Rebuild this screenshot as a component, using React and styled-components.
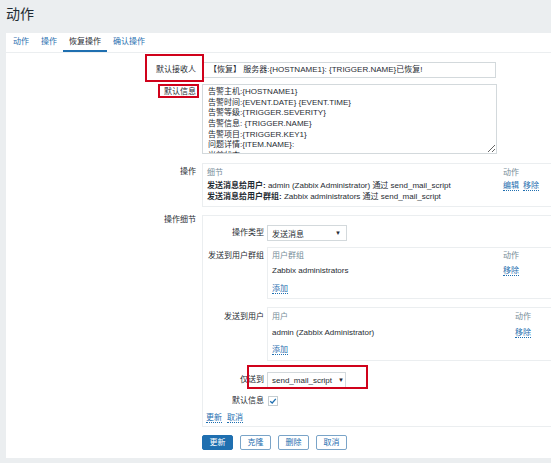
import React from "react";
import styled, { createGlobalStyle } from "styled-components";

const GlobalStyle = createGlobalStyle`
  html, body {
    margin: 0;
    padding: 0;
    background: #ebeef0;
  }
  body {
    font-family: "Liberation Sans", "Noto Sans CJK SC", sans-serif;
    font-size: 8px;
    color: #1f2c33;
  }
`;

const BLUE = "#1f6fb0";
const RED = "#d0021b";

const Page = styled.div`
  width: 551px;
  height: 463px;
  overflow: hidden;
  background: #ebeef0;
`;

const Header = styled.div`
  height: 33px;
  box-sizing: border-box;
  padding: 5px 0 0 6px;
`;

const Title = styled.h1`
  margin: 0;
  font-size: 14px;
  line-height: 18px;
  font-weight: normal;
  color: #1f2c33;
`;

const Panel = styled.div`
  margin-left: 6px;
  height: 425px;
  background: #fff;
  overflow: hidden;
`;

const Tabs = styled.div`
  display: flex;
  padding-left: 1px;
  border-bottom: 1px solid #ebeef0;
`;

const Tab = styled.div`
  padding: 0 6px;
  height: 17px;
  line-height: 17px;
  color: ${(p) => (p.$active ? "#1f2c33" : BLUE)};
  border-bottom: 2px solid ${(p) => (p.$active ? BLUE : "transparent")};
`;

const Form = styled.div`
  display: flex;
  flex-direction: column;
  padding-top: 9px;
`;

const Row = styled.div`
  position: relative;
  display: grid;
  grid-template-columns: 190px 1fr;
  column-gap: 6px;
  margin-top: ${(p) => p.$mt || 0}px;
`;

const Label = styled.div`
  text-align: right;
  line-height: ${(p) => p.$lh || 10}px;
  padding-top: ${(p) => p.$pt || 0}px;
  white-space: nowrap;
`;

const RedMark = styled.div`
  position: absolute;
  border: 2px solid ${RED};
  box-sizing: border-box;
  pointer-events: none;
`;

const TextInput = styled.div`
  width: 294px;
  height: 16px;
  box-sizing: border-box;
  border: 1px solid #d3d9dc;
  padding: 0 6px;
  line-height: 14px;
  white-space: nowrap;
  overflow: hidden;
`;

const TextArea = styled.textarea`
  display: block;
  width: 295px;
  height: 70px;
  box-sizing: border-box;
  border: 1px solid #d3d9dc;
  padding: 2px 5px;
  margin: 0;
  font-family: "Liberation Sans", "Noto Sans CJK SC", sans-serif;
  font-size: 8px;
  line-height: 10.67px;
  color: #1f2c33;
  resize: both;
  outline: none;
  &::-webkit-scrollbar {
    width: 5px;
  }
  &::-webkit-scrollbar-track {
    background: #f4f6f7;
  }
  &::-webkit-scrollbar-thumb {
    background: #c5cdd1;
  }
  &::-webkit-scrollbar-corner {
    background: #fff;
  }
`;

const Box = styled.div`
  border: 1px solid #ebeef0;
  margin-right: -1px;
  padding: ${(p) => p.$pad || "4px 0 4px 4px"};
`;

const Table = styled.div`
  display: grid;
  grid-template-columns: 1fr ${(p) => p.$action}px;
`;

const Th = styled.div`
  color: #768d99;
  line-height: 10px;
  margin-bottom: ${(p) => p.$mb || 0}px;
`;

const Td = styled.div`
  line-height: 11px;
  white-space: nowrap;
  margin-top: ${(p) => p.$mt || 0}px;
`;

const Strong = styled.b`
  font-weight: bold;
`;

const Link = styled.span`
  color: ${BLUE};
  border-bottom: 1px dotted ${BLUE};
  margin-right: ${(p) => p.$mr || 0}px;
  cursor: pointer;
`;

const SubRow = styled.div`
  position: relative;
  display: grid;
  grid-template-columns: 61px 1fr;
  column-gap: 3px;
  margin-top: ${(p) => p.$mt || 0}px;
`;

const Select = styled.div`
  display: flex;
  align-items: center;
  justify-content: ${(p) => (p.$tight ? "flex-start" : "space-between")};
  gap: 6px;
  width: ${(p) => p.$w}px;
  height: 16px;
  box-sizing: border-box;
  border: 1px solid #d3d9dc;
  padding: 0 5px 0 4px;
  white-space: nowrap;
`;

const Arrow = styled.span`
  font-size: 6px;
  color: #1f2c33;
`;

const Check = styled.div`
  width: 10px;
  height: 10px;
  box-sizing: border-box;
  border: 1px solid #c5cdd1;
  display: flex;
  align-items: center;
  justify-content: center;
  margin-left: 1px;
`;

const LinkRow = styled.div`
  line-height: 10px;
  margin-top: 7px;
  padding-left: 3px;
`;

const Buttons = styled.div`
  display: flex;
  gap: 7px;
  margin-top: 8px;
  padding-left: 196px;
`;

const Button = styled.button`
  width: 31px;
  height: 15px;
  padding: 0;
  box-sizing: border-box;
  border-radius: 2px;
  font-family: "Liberation Sans", "Noto Sans CJK SC", sans-serif;
  font-size: 8px;
  line-height: 13px;
  border: 1px solid ${(p) => (p.$primary ? BLUE : "#7aa4c8")};
  background: ${(p) => (p.$primary ? BLUE : "#fff")};
  color: ${(p) => (p.$primary ? "#fff" : BLUE)};
`;

const message = [
  "告警主机:{HOSTNAME1}",
  "告警时间:{EVENT.DATE} {EVENT.TIME}",
  "告警等级:{TRIGGER.SEVERITY}",
  "告警信息: {TRIGGER.NAME}",
  "告警项目:{TRIGGER.KEY1}",
  "问题详情:{ITEM.NAME}:",
  "当前状态:{ITEM.VALUE1}",
  "事件ID:{EVENT.ID}",
].join("\n");

export default function App() {
  return (
    <Page>
      <GlobalStyle />
      <Header>
        <Title>动作</Title>
      </Header>
      <Panel>
        <Tabs>
          <Tab>动作</Tab>
          <Tab>操作</Tab>
          <Tab $active>恢复操作</Tab>
          <Tab>确认操作</Tab>
        </Tabs>
        <Form>
          <Row>
            <Label $lh={16}>默认接收人</Label>
            <TextInput>【恢复】 服务器:{"{HOSTNAME1}"}: {"{TRIGGER.NAME}"}已恢复!</TextInput>
            <RedMark style={{ left: 139, top: -8, width: 59, height: 28 }} />
          </Row>
          <Row $mt={6}>
            <Label $lh={16}>默认信息</Label>
            <TextArea readOnly value={message} />
            <RedMark style={{ left: 152, top: 0, width: 41, height: 14 }} />
          </Row>
          <Row $mt={9}>
            <Label $pt={4}>操作</Label>
            <Box>
              <Table $action={48}>
                <Th $mb={2}>细节</Th>
                <Th $mb={2}>动作</Th>
                <Td>
                  <Strong>发送消息给用户:</Strong> admin (Zabbix Administrator) 通过 send_mail_script
                </Td>
                <Td>
                  <Link $mr={4}>编辑</Link>
                  <Link>移除</Link>
                </Td>
                <Td>
                  <Strong>发送消息给用户群组:</Strong> Zabbix administrators 通过 send_mail_script
                </Td>
                <Td />
              </Table>
            </Box>
          </Row>
          <Row $mt={8}>
            <Label $pt={0}>操作细节</Label>
            <Box $pad="9px 0 3px 0">
              <SubRow>
                <Label $lh={16}>操作类型</Label>
                <Select $w={80}>
                  <span>发送消息</span>
                  <Arrow>▼</Arrow>
                </Select>
              </SubRow>
              <SubRow $mt={6}>
                <Label $pt={4}>发送到用户群组</Label>
                <Box $pad="3px 0 4px 4px">
                  <Table $action={48}>
                    <Th>用户群组</Th>
                    <Th>动作</Th>
                    <Td $mt={4}>Zabbix administrators</Td>
                    <Td $mt={4}>
                      <Link>移除</Link>
                    </Td>
                    <Td $mt={7}>
                      <Link>添加</Link>
                    </Td>
                    <Td />
                  </Table>
                </Box>
              </SubRow>
              <SubRow $mt={8}>
                <Label $pt={5}>发送到用户</Label>
                <Box $pad="4px 0 5px 4px">
                  <Table $action={36}>
                    <Th>用户</Th>
                    <Th>动作</Th>
                    <Td $mt={5}>admin (Zabbix Administrator)</Td>
                    <Td $mt={5}>
                      <Link>移除</Link>
                    </Td>
                    <Td $mt={6}>
                      <Link>添加</Link>
                    </Td>
                    <Td />
                  </Table>
                </Box>
              </SubRow>
              <SubRow $mt={11}>
                <Label $lh={16}>仅送到</Label>
                <Select $w={79} $tight>
                  <span>send_mail_script</span>
                  <Arrow>▼</Arrow>
                </Select>
                <RedMark style={{ left: 44, top: -7, width: 121, height: 24 }} />
              </SubRow>
              <SubRow $mt={8}>
                <Label>默认信息</Label>
                <Check>
                  <svg width="8" height="8" viewBox="0 0 8 8">
                    <path d="M1.2 4.2 L3.2 6 L6.8 1.8" fill="none" stroke={BLUE} strokeWidth="1.3" />
                  </svg>
                </Check>
              </SubRow>
              <LinkRow>
                <Link $mr={5}>更新</Link>
                <Link>取消</Link>
              </LinkRow>
            </Box>
          </Row>
          <Buttons>
            <Button $primary>更新</Button>
            <Button>克隆</Button>
            <Button>删除</Button>
            <Button>取消</Button>
          </Buttons>
        </Form>
      </Panel>
    </Page>
  );
}
